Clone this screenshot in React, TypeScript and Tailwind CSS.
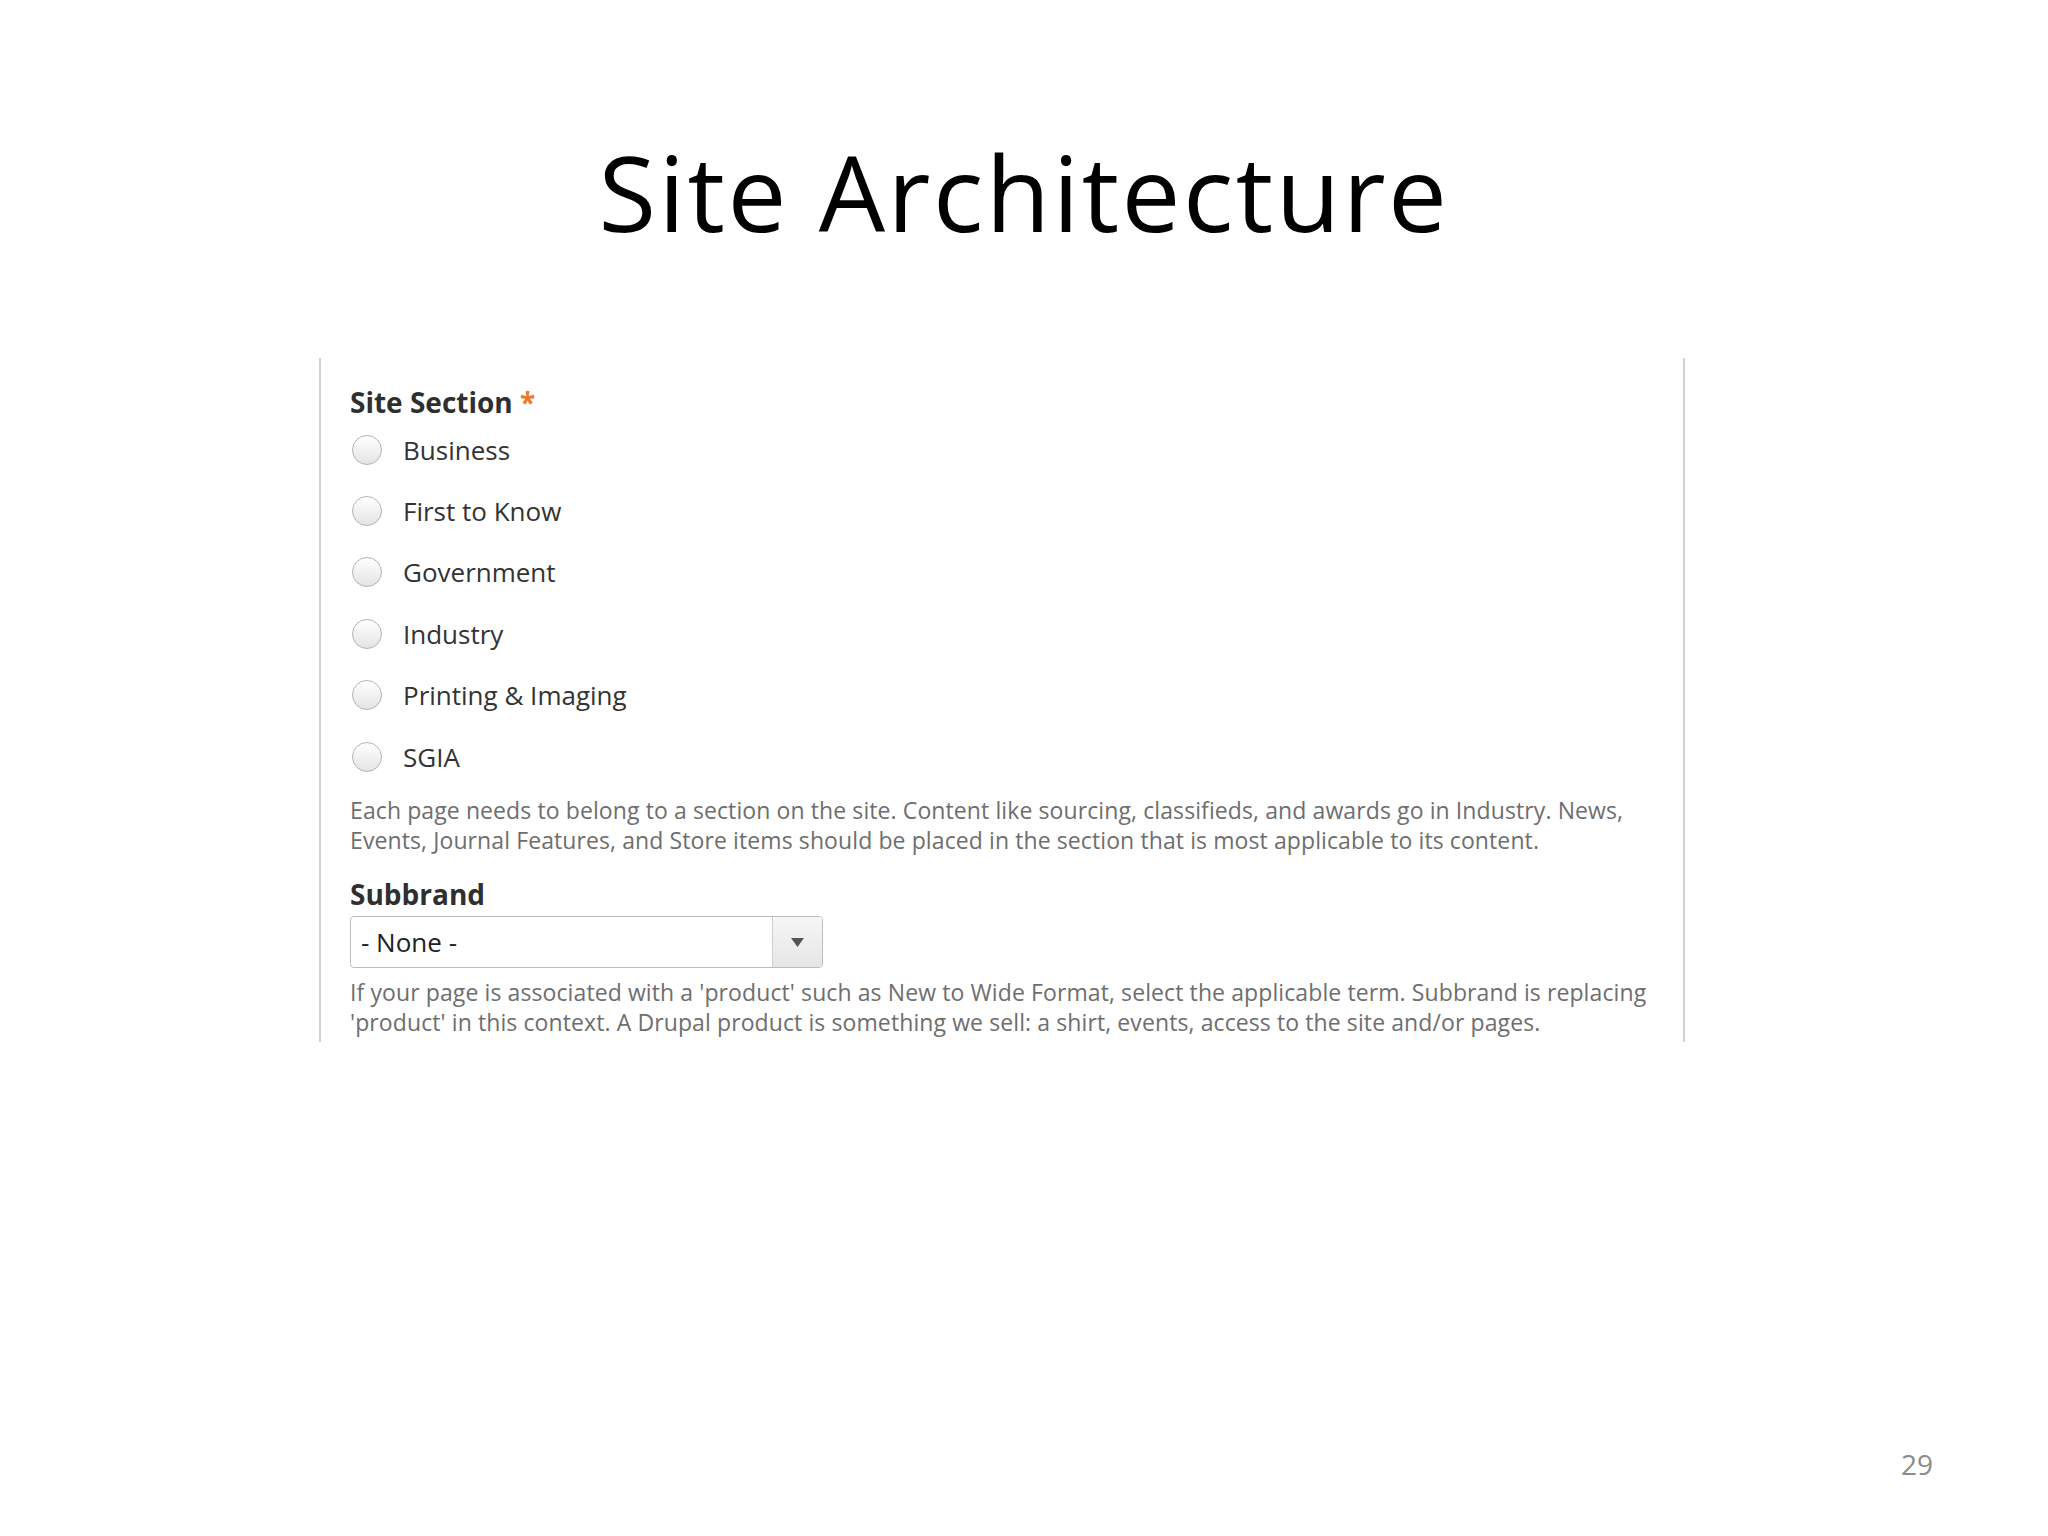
import type { ReactNode } from 'react'

const sections = ['Business', 'First to Know', 'Government', 'Industry', 'Printing & Imaging', 'SGIA']

function Radio({ label }: { label: string }) {
  return (
    <label className="flex h-[61.4px] items-center">
      <span className="ml-[2px] h-[30px] w-[30px] shrink-0 rounded-full border border-[#b3b3b3] bg-gradient-to-b from-white to-[#e4e4e4] shadow-[inset_0_1px_1px_rgba(255,255,255,0.9)]" />
      <span className="ml-[21px] text-[26px] leading-none text-[#333]">{label}</span>
    </label>
  )
}

function Help({ children, className = '' }: { children: ReactNode; className?: string }) {
  return (
    <p className={`text-[23px] leading-[30px] tracking-[0.1px] text-[#6e6e6e] ${className}`}>{children}</p>
  )
}

export default function App() {
  return (
    <div className="relative flex h-[1536px] w-[2048px] flex-col bg-white font-['Open_Sans',sans-serif]">
      <h1 className="mt-[139px] text-center text-[105px] leading-[105px] tracking-[2.5px] text-black">
        Site Architecture
      </h1>

      <div className="ml-[319px] mt-[114px] h-[684px] w-[1366px] border-x-2 border-[#d2d2d2] pl-[29px] pt-[27px]">
        <div className="text-[28px] font-bold leading-[34px] text-[#2f2f2f]">
          Site Section <span className="text-[#f0782c]">*</span>
        </div>

        <div className="flex flex-col">
          {sections.map((s) => (
            <Radio key={s} label={s} />
          ))}
        </div>

        <Help className="mt-[8px] w-[1300px]">
          Each page needs to belong to a section on the site. Content like sourcing, classifieds, and awards go in
          Industry. News, Events, Journal Features, and Store items should be placed in the section that is most
          applicable to its content.
        </Help>

        <div className="mt-[22px] text-[28px] font-bold leading-[34px] text-[#2f2f2f]">Subbrand</div>

        <div className="mt-[5px] flex h-[52px] w-[473px] overflow-hidden rounded-[4px] border border-[#bdbdbd] bg-white">
          <div className="flex flex-1 items-center pl-[10px] text-[26px] text-[#222]">- None -</div>
          <div className="flex w-[50px] items-center justify-center border-l border-[#cfcfcf] bg-gradient-to-b from-[#f6f6f6] to-[#e6e6e6]">
            <svg width="13" height="9" viewBox="0 0 13 9">
              <path d="M0 0 H13 L6.5 9 Z" fill="#555" />
            </svg>
          </div>
        </div>

        <Help className="mt-[9px] w-[1312px]">
          If your page is associated with a 'product' such as New to Wide Format, select the applicable term. Subbrand
          is replacing 'product' in this context. A Drupal product is something we sell: a shirt, events, access to the
          site and/or pages.
        </Help>
      </div>

      <div className="absolute left-[1901px] top-[1444px] text-[28px] leading-[40px] text-[#8b8b8b]">29</div>
    </div>
  )
}
